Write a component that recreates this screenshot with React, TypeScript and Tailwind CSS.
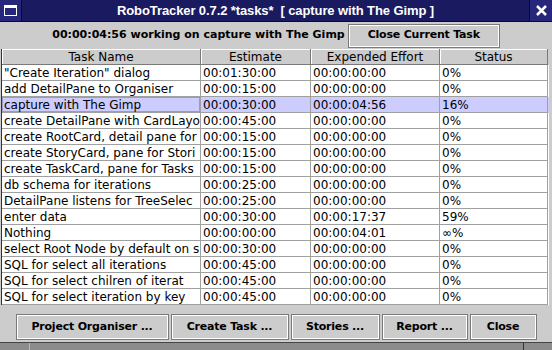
import React from "react";

const rows: [string, string, string, string][] = [
  ['"Create Iteration" dialog', "00:01:30:00", "00:00:00:00", "0%"],
  ["add DetailPane to Organiser", "00:00:15:00", "00:00:00:00", "0%"],
  ["capture with The Gimp", "00:00:30:00", "00:00:04:56", "16%"],
  ["create DetailPane with CardLayou", "00:00:45:00", "00:00:00:00", "0%"],
  ["create RootCard, detail pane for", "00:00:15:00", "00:00:00:00", "0%"],
  ["create StoryCard, pane for Stori", "00:00:15:00", "00:00:00:00", "0%"],
  ["create TaskCard, pane for Tasks", "00:00:15:00", "00:00:00:00", "0%"],
  ["db schema for iterations", "00:00:25:00", "00:00:00:00", "0%"],
  ["DetailPane listens for TreeSelec", "00:00:25:00", "00:00:00:00", "0%"],
  ["enter data", "00:00:30:00", "00:00:17:37", "59%"],
  ["Nothing", "00:00:00:00", "00:00:04:01", "∞%"],
  ["select Root Node by default on s", "00:00:30:00", "00:00:00:00", "0%"],
  ["SQL for select all iterations", "00:00:45:00", "00:00:00:00", "0%"],
  ["SQL for select chilren of iterat", "00:00:45:00", "00:00:00:00", "0%"],
  ["SQL for select iteration by key", "00:00:45:00", "00:00:00:00", "0%"],
];

const cols = ["w-[199px]", "w-[110px]", "w-[129px]", "w-[108px]"];
const heads = ["Task Name", "Estimate", "Expended Effort", "Status"];

function Btn({ label, w }: { label: string; w: string }) {
  return (
    <div
      className={`${w} h-[26px] flex items-center justify-center border border-[#7a7a7a] shadow-[inset_1px_1px_0_#ffffff,inset_-1px_-1px_0_#ffffff] bg-[#cccccc] font-bold text-[11px] tracking-[-0.2px] text-black whitespace-nowrap`}
    >
      {label}
    </div>
  );
}

export default function App() {
  return (
    <div
      className="w-[552px] h-[350px] bg-[#cccccc] flex flex-col overflow-hidden"
      style={{ fontFamily: '"DejaVu Sans", sans-serif' }}
    >
      {/* title bar */}
      <div className="h-[22px] flex bg-[#1a1a60] border-b border-[#0a0a30]">
        <div className="w-[22px] h-full bg-[#26267a] border-r border-[#0a0a30] flex items-center justify-center">
          <div className="w-[13px] h-[11px] border border-white border-t-[3px]" />
        </div>
        <div
          className="flex-1 flex items-center justify-center text-white font-bold text-[13px] tracking-[-0.1px] whitespace-nowrap"
          style={{ fontFamily: '"Liberation Sans", sans-serif' }}
        >
          RoboTracker 0.7.2 *tasks*&nbsp;&nbsp;[ capture with The Gimp ]
        </div>
        <div className="w-[23px] h-full bg-[#26267a] border-l border-[#0a0a30] flex items-center justify-center">
          <svg width="11" height="11" viewBox="0 0 11 11">
            <path d="M1 1 L10 10 M10 1 L1 10" stroke="white" strokeWidth="2.5" />
          </svg>
        </div>
      </div>

      {/* status row */}
      <div className="h-[27px] flex items-center justify-center gap-[3px]">
        <div className="font-bold text-[11px] text-black whitespace-nowrap">
          00:00:04:56 working on capture with The Gimp
        </div>
        <div className="w-[152px] h-[24px] flex items-center justify-center border border-[#7a7a7a] shadow-[inset_1px_1px_0_#ffffff,inset_-1px_-1px_0_#ffffff] font-bold text-[11px] tracking-[-0.2px] whitespace-nowrap">
          Close Current Task
        </div>
      </div>

      {/* table */}
      <div className="ml-[1px] w-[548px] flex flex-col border-l border-[#333]">
        <div className="flex h-[16px]">
          {heads.map((h, i) => (
            <div
              key={h}
              className={`${cols[i]} h-full flex items-center justify-center text-[12px] text-black bg-[#cccccc] border-r border-b border-[#7a7a7a] shadow-[inset_1px_1px_0_#ffffff]`}
            >
              {h}
            </div>
          ))}
        </div>
        {rows.map((r, ri) => {
          const sel = ri === 2;
          return (
            <div key={ri} className={`flex h-[16px] ${sel ? "bg-[#ccccff]" : "bg-white"}`}>
              {r.map((c, ci) => (
                <div
                  key={ci}
                  className={`${cols[ci]} h-full flex items-center pl-[2px] text-[12px] leading-none text-black whitespace-nowrap overflow-hidden border-r border-b border-[#a0a0a0] ${
                    sel && ci === 0 ? "shadow-[inset_0_0_0_1px_#9999cc]" : ""
                  }`}
                >
                  {c}
                </div>
              ))}
            </div>
          );
        })}
      </div>

      {/* buttons */}
      <div className="flex-1 flex items-end justify-center gap-[2px] pb-[1px]">
        <Btn label="Project Organiser ..." w="w-[153px]" />
        <Btn label="Create Task ..." w="w-[118px]" />
        <Btn label="Stories ..." w="w-[89px]" />
        <Btn label="Report ..." w="w-[86px]" />
        <Btn label="Close" w="w-[67px]" />
      </div>

      {/* bottom strip */}
      <div className="h-[8px] mt-[1px] flex bg-[#8c8c8c] border-t border-[#444]">
        <div className="w-[30px] border-r border-[#bbbbbb]" />
        <div className="flex-1" />
        <div className="w-[29px] border-l border-[#333]" />
      </div>
    </div>
  );
}
